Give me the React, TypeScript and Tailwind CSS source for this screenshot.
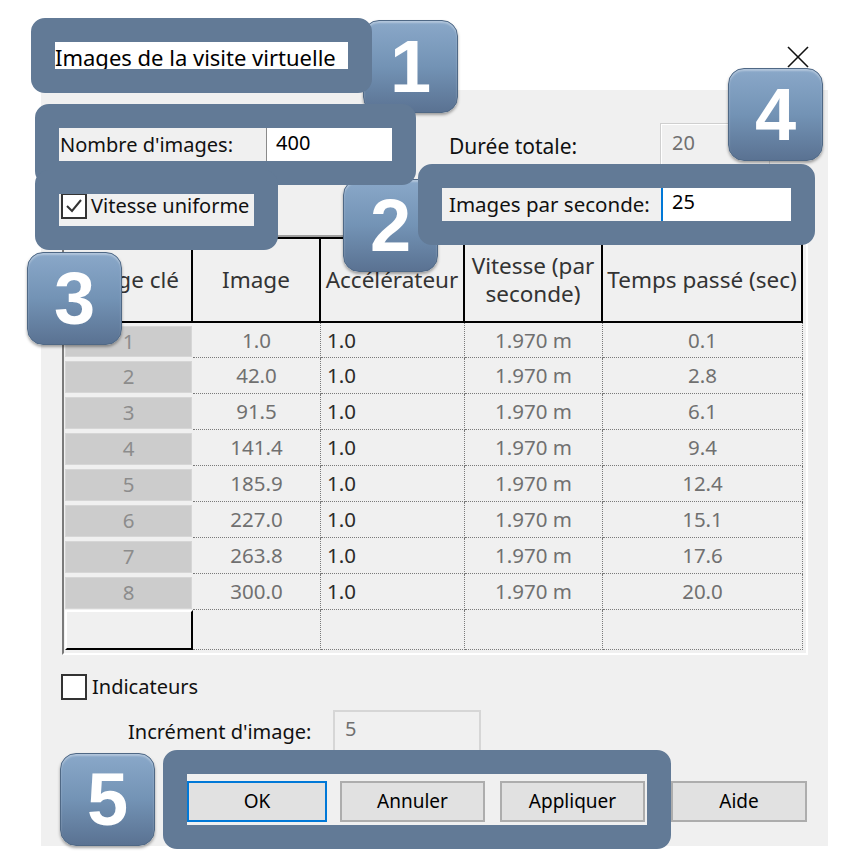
import React from "react";

const rows = [
  ["1", "1.0", "1.0", "1.970 m", "0.1"],
  ["2", "42.0", "1.0", "1.970 m", "2.8"],
  ["3", "91.5", "1.0", "1.970 m", "6.1"],
  ["4", "141.4", "1.0", "1.970 m", "9.4"],
  ["5", "185.9", "1.0", "1.970 m", "12.4"],
  ["6", "227.0", "1.0", "1.970 m", "15.1"],
  ["7", "263.8", "1.0", "1.970 m", "17.6"],
  ["8", "300.0", "1.0", "1.970 m", "20.0"],
];

function Badge({ n, cls }: { n: string; cls: string }) {
  return (
    <div
      className={`absolute w-[95px] h-[93px] rounded-[16px] border border-[#4f6885] bg-linear-to-b from-[#8aa8c9] via-[#7393b5] to-[#5a7292] shadow-[0_2px_3px_rgba(0,0,0,0.35),inset_0_2px_2px_rgba(255,255,255,0.35)] flex items-center justify-center text-white font-bold text-[74px] leading-none font-['Liberation_Sans',Arial,sans-serif] ${cls}`}
    >
      {n}
    </div>
  );
}

function Box({ cls }: { cls: string }) {
  return <div className={`absolute rounded-[14px] border-[24px] border-[#627a96] ${cls}`} />;
}

function Check({ checked }: { checked?: boolean }) {
  return (
    <div className="w-[26px] h-[26px] border-2 border-[#333333] bg-white flex items-center justify-center shrink-0">
      {checked && (
        <svg width="20" height="20" viewBox="0 0 20 20">
          <polyline points="3,10 8,15 17,4" fill="none" stroke="#333333" strokeWidth="2" />
        </svg>
      )}
    </div>
  );
}

export default function App() {
  return (
    <div className="relative w-[868px] h-[866px] bg-white overflow-hidden font-['Noto_Sans',sans-serif] text-[20px] text-[#111111]">
      {/* title bar */}
      <div className="h-[90px] flex items-start">
        <div className="ml-[55px] mt-[42px] h-[28px] leading-[30px] text-[22px] text-black whitespace-nowrap">Images de la visite virtuelle</div>
        <svg className="ml-auto mr-[59px] mt-[46px]" width="22" height="22" viewBox="0 0 22 22">
          <line x1="1" y1="1" x2="21" y2="21" stroke="#111" strokeWidth="1.6" />
          <line x1="21" y1="1" x2="1" y2="21" stroke="#111" strokeWidth="1.6" />
        </svg>
      </div>

      {/* dialog panel */}
      <div className="ml-[41px] w-[787px] h-[756px] bg-[#f0f0f0] pt-[33px] pl-[18px]">
        <div className="flex items-center h-[43px]">
          <div className="w-[207px] pl-[1px] whitespace-nowrap">Nombre d'images:</div>
          <div className="w-[127px] h-[34px] bg-white border-l border-[#8a8a8a] pl-[9px] leading-[30px] text-black">400</div>
          <div className="ml-[56px] w-[211px] pt-[4px] text-[21px] whitespace-nowrap">Durée totale:</div>
          <div className="w-[110px] h-[43px] border border-[#cfcfcf] shadow-[inset_1px_1px_0_#ffffff] pl-[11px] leading-[38px] text-[#707070]">20</div>
        </div>
        <div className="flex items-center h-[33px] mt-[22px]">
          <div className="w-[196px] flex items-center pl-[2px] self-end">
            <Check checked />
            <span className="ml-[4px] whitespace-nowrap">Vitesse uniforme</span>
          </div>
          <div className="ml-[194px] w-[212px] text-[20.5px] whitespace-nowrap">Images par seconde:</div>
          <div className="w-[130px] h-[33px] bg-white border-l-2 border-[#0078d7] pl-[9px] leading-[28px] text-black">25</div>
        </div>

        {/* table */}
        <div className="mt-[14px] ml-[3px] w-[746px] h-[420px] border-2 border-t-[#a0a0a0] border-l-[#7a7a7a] border-b-white border-r-white">
          <div className="flex h-[86px] text-[#333333] text-center leading-[28px] text-[22.5px]">
            <div className="w-[129px] border-r-2 border-b-2 border-t-2 border-black flex items-center justify-center whitespace-nowrap">Image clé</div>
            <div className="w-[128px] border-r-2 border-b-2 border-t-2 border-black flex items-center justify-center">Image</div>
            <div className="w-[144px] border-r-2 border-b-2 border-t-2 border-black flex items-center justify-center">Accélérateur</div>
            <div className="w-[138px] border-r-2 border-b-2 border-t-2 border-black flex items-center justify-center">Vitesse (par<br />seconde)</div>
            <div className="w-[200px] border-r-2 border-b-2 border-t-2 border-black flex items-center justify-center whitespace-nowrap">Temps passé (sec)</div>
          </div>
          <div className="text-[20.5px]">
            {rows.map((r, i) => (
              <div key={i} className={`flex ${i === 0 ? "h-[35px]" : "h-[36px]"}`}>
                <div className="w-[129px] pl-[1px] pr-[1px] pt-[3px] pb-[1px]">
                  <div className="h-full bg-[#cccccc] border border-[#d6d6d6] text-[#8c8c8c] text-center leading-[29px]">{r[0]}</div>
                </div>
                <div className="w-[128px] border-r border-b border-dotted border-[#7a7a7a] text-center text-[#707070] leading-[34px]">{r[1]}</div>
                <div className="w-[144px] border-r border-b border-dotted border-[#7a7a7a] pl-[6px] text-[#2a2a2a] leading-[34px]">{r[2]}</div>
                <div className="w-[138px] border-r border-b border-dotted border-[#7a7a7a] text-center text-[#707070] leading-[34px]">{r[3]}</div>
                <div className="w-[200px] border-r border-b border-dotted border-[#7a7a7a] text-center text-[#707070] leading-[34px]">{r[4]}</div>
              </div>
            ))}
          </div>
          <div className="flex h-[40px]">
            <div className="w-[129px] pl-[1px]">
              <div className="h-full bg-[#f0f0f0] border-t-2 border-l-2 border-t-white border-l-white border-r-2 border-b-2 border-r-black border-b-black" />
            </div>
            <div className="w-[128px] border-r border-b border-dotted border-[#7a7a7a]" />
            <div className="w-[144px] border-r border-b border-dotted border-[#7a7a7a]" />
            <div className="w-[138px] border-r border-b border-dotted border-[#7a7a7a]" />
            <div className="w-[200px] border-r border-b border-dotted border-[#7a7a7a]" />
          </div>
        </div>

        <div className="mt-[19px] ml-[2px] flex items-center h-[25px]">
          <Check />
          <span className="ml-[5px]">Indicateurs</span>
        </div>

        <div className="mt-[11px] flex items-center h-[43px]">
          <div className="ml-[69px] w-[205px] whitespace-nowrap">Incrément d'image:</div>
          <div className="w-[148px] h-[43px] border-2 border-[#d6d6d6] pl-[10px] leading-[34px] text-[#707070]">5</div>
        </div>

        <div className="mt-[28px] flex h-[41px] text-black text-[19px]">
          <div className="ml-[128px] w-[140px] border-2 border-[#0078d7] bg-[#e1e1e1] flex items-center justify-center">OK</div>
          <div className="ml-[13px] w-[145px] border-2 border-[#adadad] bg-[#e1e1e1] flex items-center justify-center">Annuler</div>
          <div className="ml-[15px] w-[145px] border-2 border-[#adadad] bg-[#e1e1e1] flex items-center justify-center">Appliquer</div>
          <div className="ml-[26px] w-[136px] border-2 border-[#adadad] bg-[#e1e1e1] flex items-center justify-center">Aide</div>
        </div>
      </div>

      {/* annotation overlays */}
      <Badge n="1" cls="left-[363px] top-[20px]" />
      <Badge n="2" cls="left-[343px] top-[179px]" />
      <Badge n="3" cls="left-[27px] top-[252px]" />
      <Badge n="4" cls="left-[728px] top-[68px]" />
      <Badge n="5" cls="left-[60px] top-[753px]" />

      <Box cls="left-[31px] top-[18px] w-[341px] h-[75px]" />
      <Box cls="left-[35px] top-[104px] w-[381px] h-[81px]" />
      <Box cls="left-[35px] top-[170px] w-[243px] h-[80px]" />
      <Box cls="left-[418px] top-[164px] w-[397px] h-[81px]" />
      <Box cls="left-[163px] top-[750px] w-[508px] h-[99px]" />
    </div>
  );
}
